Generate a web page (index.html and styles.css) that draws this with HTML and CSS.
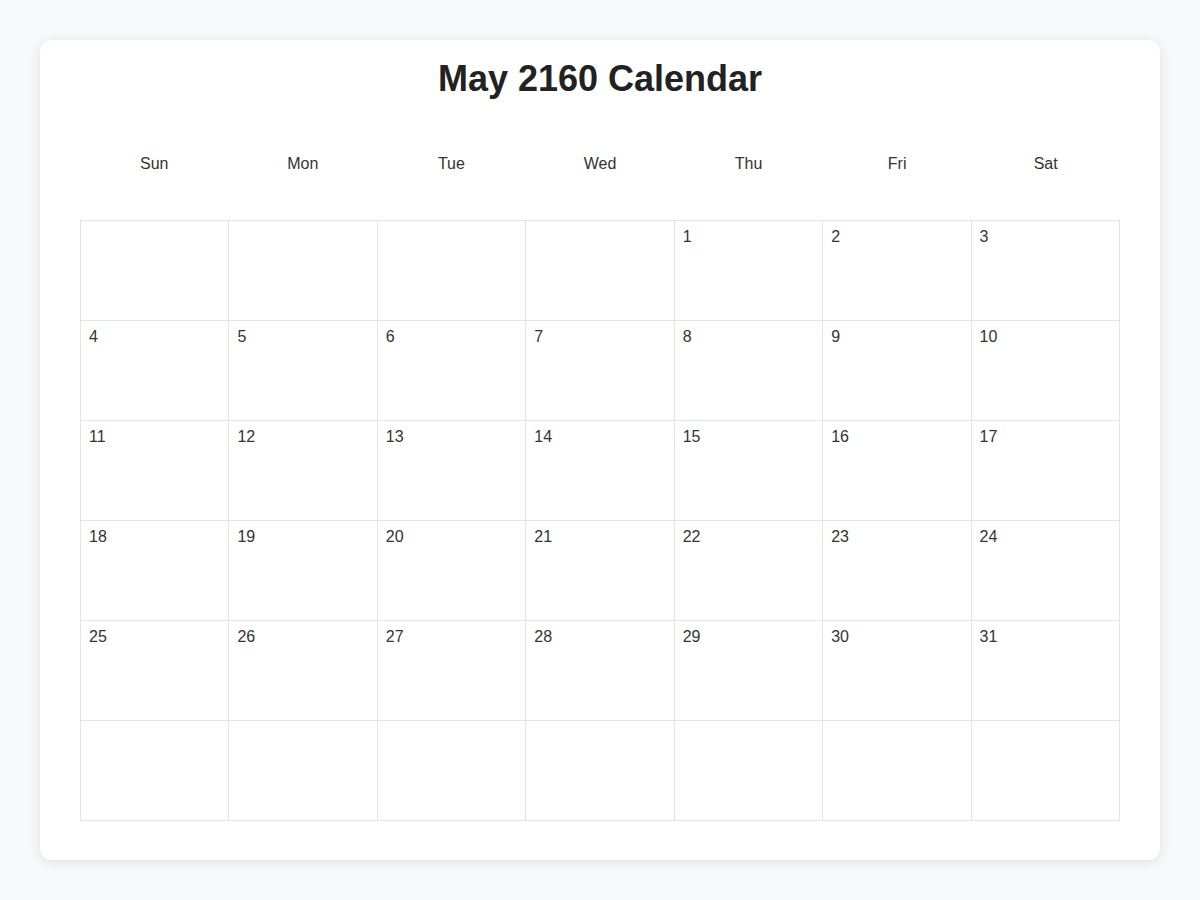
FILE: index.html
```html
<!DOCTYPE html>
<html lang="en">
  <head>
    <meta charset="UTF-8" />
    <meta name="viewport" content="width=device-width, initial-scale=1.0" />
    <title>May 2160 Calendar</title>
    <link rel="stylesheet" href="styles.css">
  </head>
  <body>
    <div class="calendar">
      <h1>May 2160 Calendar</h1>
      <div class="weekdays">
        <div>Sun</div>
        <div>Mon</div>
        <div>Tue</div>
        <div>Wed</div>
        <div>Thu</div>
        <div>Fri</div>
        <div>Sat</div>
      </div>
      <div class="days">
        <div class="day"></div>
        <div class="day"></div>
        <div class="day"></div>
        <div class="day"></div>
        <div class="day">1</div>
        <div class="day">2</div>
        <div class="day">3</div>
        <div class="day">4</div>
        <div class="day">5</div>
        <div class="day">6</div>
        <div class="day">7</div>
        <div class="day">8</div>
        <div class="day">9</div>
        <div class="day">10</div>
        <div class="day">11</div>
        <div class="day">12</div>
        <div class="day">13</div>
        <div class="day">14</div>
        <div class="day">15</div>
        <div class="day">16</div>
        <div class="day">17</div>
        <div class="day">18</div>
        <div class="day">19</div>
        <div class="day">20</div>
        <div class="day">21</div>
        <div class="day">22</div>
        <div class="day">23</div>
        <div class="day">24</div>
        <div class="day">25</div>
        <div class="day">26</div>
        <div class="day">27</div>
        <div class="day">28</div>
        <div class="day">29</div>
        <div class="day">30</div>
        <div class="day">31</div>
        <div class="day"></div>
        <div class="day"></div>
        <div class="day"></div>
        <div class="day"></div>
        <div class="day"></div>
        <div class="day"></div>
        <div class="day"></div>
      </div>
    </div>
  </body>
</html>
```

FILE: styles.css
```css
body {
  font-family: "Liberation Sans", Arial, sans-serif;
  background-color: #f7f8fa;
  margin: 0;
  padding: 40px;
  color: #333;
}

.calendar {
  background-color: #fff;
  border-radius: 12px;
  box-shadow: 0 2px 12px rgba(0, 0, 0, 0.1);
  padding: 18px 40px 39px;
}

h1 {
  margin: 0;
  font-size: 36px;
  line-height: 42px;
  text-align: center;
  color: #222;
}

.weekdays {
  display: grid;
  grid-template-columns: repeat(7, 1fr);
  margin-top: 44px;
}

.weekdays div {
  padding: 10px;
  font-size: 16px;
  line-height: 20px;
  text-align: center;
  color: #333;
}

.days {
  display: grid;
  grid-template-columns: repeat(7, 1fr);
  grid-auto-rows: 100px;
  margin-top: 36px;
  border-top: 1px solid #e4e4e4;
  border-left: 1px solid #e4e4e4;
}

.day {
  border-right: 1px solid #e4e4e4;
  border-bottom: 1px solid #e4e4e4;
  padding: 6px 8px;
  font-size: 16px;
  line-height: 20px;
  color: #333;
}
```
